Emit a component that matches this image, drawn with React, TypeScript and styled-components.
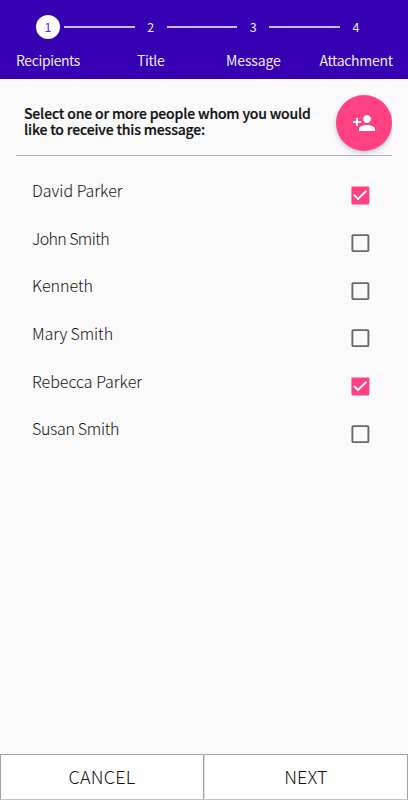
import React, { useState } from "react";
import styled, { createGlobalStyle } from "styled-components";

const GlobalStyle = createGlobalStyle`
  * { box-sizing: border-box; }
  body { margin: 0; background: #fafafa; }
  button { font: inherit; color: inherit; margin: 0; padding: 0; border: 0; background: none; }
`;

const Screen = styled.div`
  display: flex;
  flex-direction: column;
  height: 800px;
  width: 408px;
  overflow: hidden;
  background: #fafafa;
  color: #101010;
  font-family: "Noto Sans CJK SC", "Noto Sans", sans-serif;
`;

const Header = styled.header`
  display: flex;
  height: 79px;
  padding: 15px 36px 0 32px;
  background: #3700b3;
  color: #eeebff;
`;

const Step = styled.div`
  display: flex;
  flex-direction: column;
  align-items: center;
  width: 32px;
  flex: none;
`;

const StepNumber = styled.span<{ $active: boolean }>`
  display: flex;
  align-items: center;
  justify-content: center;
  width: 24px;
  height: 24px;
  border-radius: 50%;
  font-size: 12.5px;
  line-height: 24px;
  background: ${(p) => (p.$active ? "#fff" : "transparent")};
  color: ${(p) => (p.$active ? "#6a1be0" : "inherit")};
`;

const StepLabel = styled.span<{ $spacing: number }>`
  margin-top: 11px;
  font-size: 14px;
  line-height: 20px;
  white-space: nowrap;
  letter-spacing: ${(p) => p.$spacing}px;
`;

const Connector = styled.div`
  flex: 1;
  height: 2px;
  margin-top: 11px;
  background: #c9bdf0;
`;

const Intro = styled.section`
  display: flex;
  justify-content: space-between;
  height: 77px;
  margin: 0 16px;
  padding: 16px 0 0 8px;
  border-bottom: 1px solid #b4b4b4;
  overflow-x: clip;
`;

const Prompt = styled.h1`
  margin: 10px 0 0;
  font-size: 14px;
  line-height: 16px;
  font-weight: 500;
  letter-spacing: -0.16px;
  -webkit-text-stroke: 0.2px #101010;
  white-space: nowrap;
`;

const AddButton = styled.button`
  display: flex;
  align-items: center;
  justify-content: center;
  flex: none;
  width: 56px;
  height: 56px;
  border-radius: 50%;
  background: #ff4081;
  box-shadow: 0 2px 5px rgba(0, 0, 0, 0.22);
`;

const List = styled.ul`
  flex: 1;
  margin: 0;
  padding: 16px 38px 0 32px;
  list-style: none;
`;

const Row = styled.li`
  display: flex;
  justify-content: space-between;
  height: 47.67px;
`;

const Name = styled.span<{ $spacing: number }>`
  padding-top: 6px;
  font-size: 16px;
  line-height: 24px;
  font-weight: 300;
  letter-spacing: ${(p) => p.$spacing}px;
`;

const Check = styled.button`
  width: 20px;
  height: 20px;
  margin-top: 13.4px;
  line-height: 0;
`;

const Footer = styled.footer`
  display: grid;
  grid-template-columns: 204px 204px;
  height: 46px;
  background: #fff;
`;

const FooterButton = styled.button<{ $spacing: number }>`
  && {
    padding-bottom: 2px;
    border: 1px solid #a3a3a3;
    border-bottom-color: #c4c4c4;
    font-size: 18px;
    font-weight: 300;
    letter-spacing: ${(p) => p.$spacing}px;
  }
  & + && { border-left-color: #dedede; }
`;

const steps = [
  { label: "Recipients", spacing: -0.4 },
  { label: "Title", spacing: -0.4 },
  { label: "Message", spacing: -0.15 },
  { label: "Attachment", spacing: -0.3 },
];

const people = [
  { name: "David Parker", checked: true, spacing: 0 },
  { name: "John Smith", checked: false, spacing: -0.6 },
  { name: "Kenneth", checked: false, spacing: 0 },
  { name: "Mary Smith", checked: false, spacing: -0.1 },
  { name: "Rebecca Parker", checked: true, spacing: 0 },
  { name: "Susan Smith", checked: false, spacing: -0.32 },
];

function CheckIcon({ checked }: { checked: boolean }) {
  return (
    <svg width="20" height="20" viewBox="-0.4 0 20 20" fill="none">
      {checked ? (
        <>
          <rect x="1" y="1.4" width="18" height="18" rx="1.4" fill="#ff4081" />
          <path d="M3.6 10 7.7 14 16 5.8" stroke="#fff" strokeWidth="1.9" />
        </>
      ) : (
        <rect x="2" y="2.1" width="16" height="16" rx="0.8" stroke="#686868" strokeWidth="1.9" />
      )}
    </svg>
  );
}

export default function App() {
  const [list, setList] = useState(people);
  const toggle = (i: number) =>
    setList(list.map((p, n) => (n === i ? { ...p, checked: !p.checked } : p)));

  return (
    <>
      <GlobalStyle />
      <Screen>
        <Header>
          {steps.map((s, i) => (
            <React.Fragment key={s.label}>
              {i > 0 && <Connector />}
              <Step>
                <StepNumber $active={i === 0}>{i + 1}</StepNumber>
                <StepLabel $spacing={s.spacing}>{s.label}</StepLabel>
              </Step>
            </React.Fragment>
          ))}
        </Header>
        <Intro>
          <Prompt>
            Select one or more people whom you would
            <br />
            like to receive this message:
          </Prompt>
          <AddButton aria-label="Add person">
            <svg width="24" height="24" viewBox="0 0 24 24" fill="#fff">
              <path d="M15 12c2.21 0 4-1.79 4-4s-1.79-4-4-4-4 1.79-4 4 1.79 4 4 4zm-9-2V7H4v3H1v2h3v3h2v-3h3v-2H6zm9 4c-2.67 0-8 1.34-8 4v2h16v-2c0-2.66-5.33-4-8-4z" />
            </svg>
          </AddButton>
        </Intro>
        <List>
          {list.map((p, i) => (
            <Row key={p.name}>
              <Name $spacing={p.spacing}>{p.name}</Name>
              <Check role="checkbox" aria-checked={p.checked} aria-label={p.name} onClick={() => toggle(i)}>
                <CheckIcon checked={p.checked} />
              </Check>
            </Row>
          ))}
        </List>
        <Footer>
          <FooterButton $spacing={0.2}>CANCEL</FooterButton>
          <FooterButton $spacing={0.2}>NEXT</FooterButton>
        </Footer>
      </Screen>
    </>
  );
}
